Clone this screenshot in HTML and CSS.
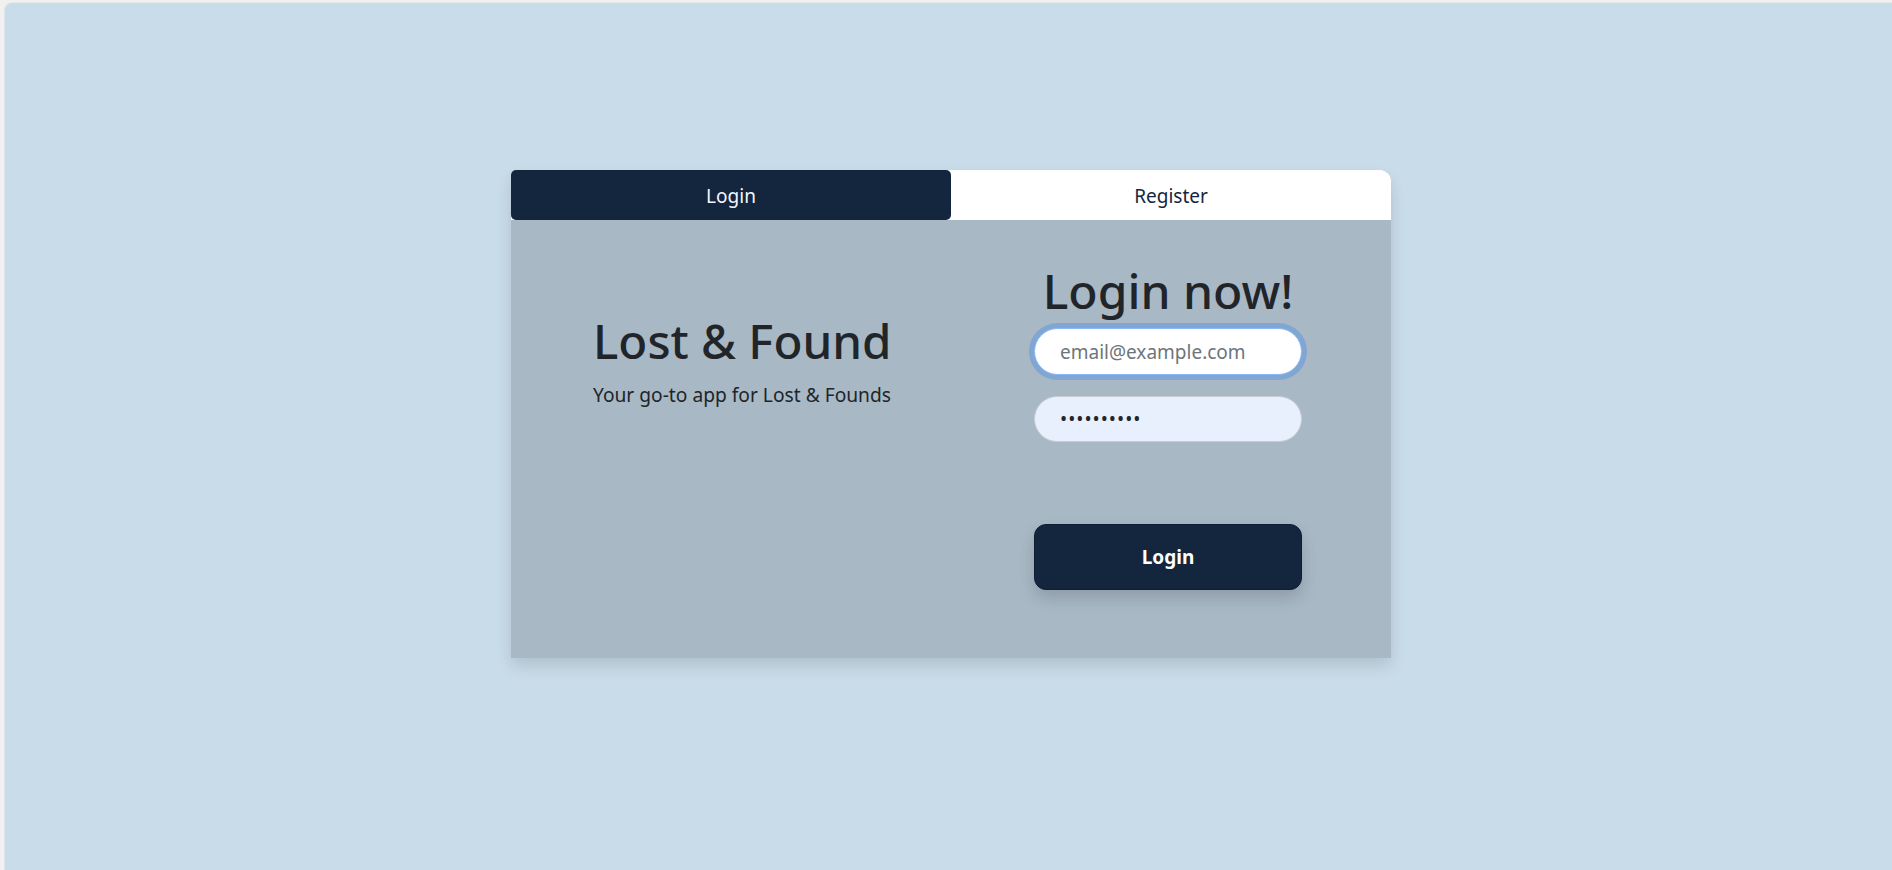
FILE: index.html
```html
<!DOCTYPE html>
<html lang="en">
<head>
<meta charset="utf-8">
<title>Lost &amp; Found</title>
<link rel="stylesheet" href="styles.css">
</head>
<body>
<div class="panel">
  <div class="card">
    <div class="tabs">
      <div class="tab tab-active">Login</div>
      <div class="tab tab-idle">Register</div>
    </div>
    <div class="card-body">
      <div class="intro">
        <h1 class="intro-title">Lost &amp; Found</h1>
        <p class="intro-lead">Your go-to app for Lost &amp; Founds</p>
      </div>
      <form class="login-form">
        <h2 class="form-title">Login now!</h2>
        <input class="field field-focus" type="email" placeholder="email@example.com">
        <input class="field field-filled" type="password" value="0123456789">
        <button class="submit" type="button">Login</button>
      </form>
    </div>
  </div>
</div>
</body>
</html>
```
FILE: styles.css
```css
* { box-sizing: border-box; }
html, body { margin: 0; height: 100%; }
body {
  background: #f1f1f1;
  font-family: "Noto Sans", "Open Sans", sans-serif;
  color: #212529;
  overflow: hidden;
}
.panel {
  margin: 2px 0 0 4px;
  height: calc(100% - 2px);
  background: #c9dce9;
  border-radius: 8px 0 0 0;
  border-left: 1px solid #e2e6ea;
  border-top: 1px solid #e6e8ea;
  display: flex;
  justify-content: center;
  align-items: flex-start;
  padding: 167px 0 0 5px;
}
.card {
  width: 880px;
  box-shadow: 0 8px 16px rgba(0, 0, 0, 0.12);
  border-radius: 5px 12px 0 0;
  background: #ffffff;
}
.tabs {
  display: grid;
  grid-template-columns: 440px 440px;
  height: 50px;
}
.tab {
  display: flex;
  align-items: center;
  justify-content: center;
  font-size: 19px;
  padding-top: 2px;
}
.tab-active {
  background: #14263e;
  color: #f3f7ff;
  border-radius: 5px;
}
.tab-idle {
  background: #ffffff;
  color: #14263e;
  border-radius: 0 12px 0 0;
}
.card-body {
  display: grid;
  grid-template-columns: 440px 440px;
  height: 438px;
  background: #a8b8c5;
}
.intro {
  padding: 91px 0 0 82px;
}
.intro-title {
  margin: 0;
  font-size: 47.5px;
  line-height: 60px;
  font-weight: 500;
  color: #212529;
}
.intro-lead {
  margin: 10px 0 0;
  font-size: 19.2px;
  line-height: 27px;
  color: #212529;
}
.login-form {
  display: flex;
  flex-direction: column;
  align-items: center;
  padding: 41px 0 0 0;
  margin-left: -6px;
}
.form-title {
  margin: 0 0 7px;
  font-size: 48px;
  line-height: 60px;
  font-weight: 500;
  color: #212529;
}
.field {
  width: 268px;
  height: 47px;
  border-radius: 24px;
  border: 1px solid #c6ccd2;
  padding: 0 25px;
  font-family: inherit;
  font-size: 19px;
  color: #212529;
  outline: none;
}
.field::placeholder { color: #6c757d; }
.field-focus {
  background: #ffffff;
  border-color: #86b7fe;
  box-shadow: 0 0 0 5px rgba(13, 110, 253, 0.25);
}
.field-filled {
  margin-top: 21px;
  background: #e8f0fe;
  height: 46px;
  letter-spacing: 1px;
}
.submit {
  margin-top: 82px;
  width: 268px;
  height: 66px;
  border-radius: 12px;
  border: 1px solid #0f1e31;
  background: #14263e;
  color: #ffffff;
  font-family: inherit;
  font-size: 19px;
  font-weight: 700;
  box-shadow: 0 8px 16px rgba(0, 0, 0, 0.15);
}
```
